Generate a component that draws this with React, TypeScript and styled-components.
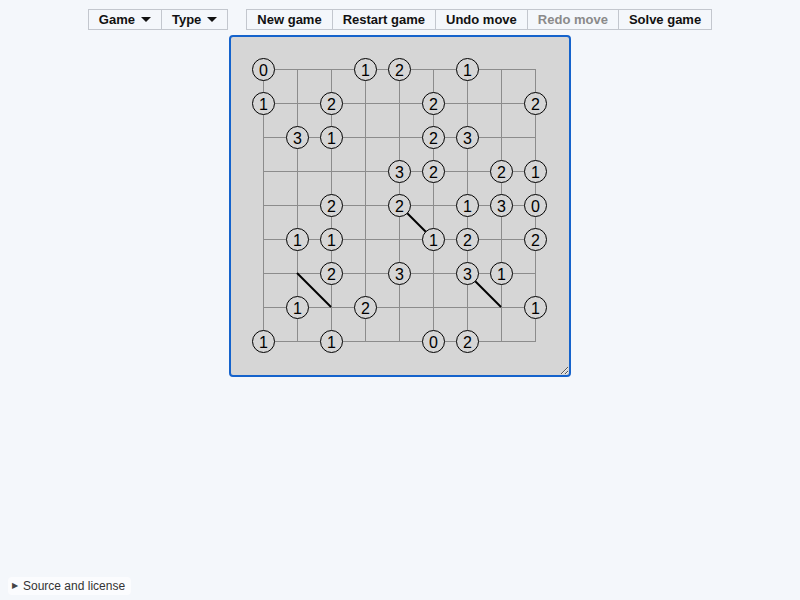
import React from 'react';
import styled, { createGlobalStyle } from 'styled-components';

const GlobalStyle = createGlobalStyle`
  html, body, #root {
    height: 100%;
  }
  body {
    margin: 0;
    background: #f4f7fb;
    font-family: "Liberation Sans", Arial, Helvetica, sans-serif;
  }
`;

const Page = styled.div`
  min-height: 100%;
  display: flex;
  flex-direction: column;
  align-items: center;
  box-sizing: border-box;
  padding-top: 9px;
`;

const Toolbar = styled.div`
  display: flex;
  gap: 18px;
  align-items: flex-start;
`;

const ButtonGroup = styled.div`
  display: flex;
  border: 1px solid #c3c7ce;
`;

const ToolButton = styled.button<{ $disabled?: boolean }>`
  height: 19px;
  padding: 0 10px;
  border: none;
  border-left: 1px solid #c3c7ce;
  background: transparent;
  font-family: inherit;
  font-weight: bold;
  font-size: 13px;
  color: ${p => (p.$disabled ? '#8a8a8a' : '#111')};
  display: flex;
  align-items: center;
  gap: 6px;
  cursor: default;
  &:first-child {
    border-left: none;
  }
`;

const Caret = () => (
  <svg width="10" height="5" viewBox="0 0 10 5">
    <path d="M0 0 L10 0 L5 5 Z" fill="#111" />
  </svg>
);

const Board = styled.div`
  margin-top: 5px;
  width: 338px;
  height: 338px;
  border: 2px solid #1563cc;
  border-radius: 4px;
  background: #d6d6d6;
  resize: both;
  overflow: hidden;
`;

const Footer = styled.details`
  margin-top: auto;
  align-self: flex-start;
  margin-left: 8px;
  margin-bottom: 5px;
  background: #fbfcfe;
  border-radius: 4px;
  padding: 2px 6px 2px 4px;
  font-size: 12px;
  color: #333;
`;

const Summary = styled.summary`
  list-style: none;
  display: flex;
  align-items: center;
  gap: 5px;
  line-height: 14px;
  &::-webkit-details-marker {
    display: none;
  }
`;

const Arrow = styled.span`
  font-size: 8px;
  color: #444;
`;

const N = 8;
const T = 34;
const O = 32;

// [col, row, value]
const clues: [number, number, number][] = [
  [0, 0, 0], [3, 0, 1], [4, 0, 2], [6, 0, 1],
  [0, 1, 1], [2, 1, 2], [5, 1, 2], [8, 1, 2],
  [1, 2, 3], [2, 2, 1], [5, 2, 2], [6, 2, 3],
  [4, 3, 3], [5, 3, 2], [7, 3, 2], [8, 3, 1],
  [2, 4, 2], [4, 4, 2], [6, 4, 1], [7, 4, 3], [8, 4, 0],
  [1, 5, 1], [2, 5, 1], [5, 5, 1], [6, 5, 2], [8, 5, 2],
  [2, 6, 2], [4, 6, 3], [6, 6, 3], [7, 6, 1],
  [1, 7, 1], [3, 7, 2], [8, 7, 1],
  [0, 8, 1], [2, 8, 1], [5, 8, 0], [6, 8, 2],
];

// backslash diagonals from top-left vertex [col, row]
const slashes: [number, number][] = [
  [4, 4], [1, 6], [6, 6],
];

const SlantGrid = () => {
  const lines = [];
  for (let i = 0; i <= N; i++) {
    lines.push(
      <line key={`h${i}`} x1={O} y1={O + i * T} x2={O + N * T} y2={O + i * T} />,
      <line key={`v${i}`} x1={O + i * T} y1={O} x2={O + i * T} y2={O + N * T} />
    );
  }
  return (
    <svg width="338" height="338" viewBox="0 0 338 338" style={{ display: 'block' }}>
      <g stroke="#8c8c8c" strokeWidth="1" shapeRendering="crispEdges" transform="translate(0.5 0.5)">
        {lines}
      </g>
      <g stroke="#000" strokeWidth="2">
        {slashes.map(([c, r]) => (
          <line key={`${c}-${r}`} x1={O + c * T} y1={O + r * T} x2={O + (c + 1) * T} y2={O + (r + 1) * T} />
        ))}
      </g>
      {clues.map(([c, r, v]) => (
        <g key={`${c}-${r}`}>
          <circle cx={O + c * T + 0.5} cy={O + r * T + 0.5} r="11" fill="#d6d6d6" stroke="#000" strokeWidth="1" />
          <text
            x={O + c * T + 0.5}
            y={O + r * T + 6.5}
            textAnchor="middle"
            fontSize="16"
            fontFamily="Liberation Sans, Arial, sans-serif"
            fill="#000"
          >
            {v}
          </text>
        </g>
      ))}
    </svg>
  );
};

export default function App() {
  return (
    <>
      <GlobalStyle />
      <Page>
        <Toolbar>
          <ButtonGroup>
            <ToolButton>Game <Caret /></ToolButton>
            <ToolButton>Type <Caret /></ToolButton>
          </ButtonGroup>
          <ButtonGroup>
            <ToolButton>New game</ToolButton>
            <ToolButton>Restart game</ToolButton>
            <ToolButton>Undo move</ToolButton>
            <ToolButton $disabled>Redo move</ToolButton>
            <ToolButton>Solve game</ToolButton>
          </ButtonGroup>
        </Toolbar>
        <Board>
          <SlantGrid />
        </Board>
        <Footer>
          <Summary>
            <Arrow>▶</Arrow>Source and license
          </Summary>
        </Footer>
      </Page>
    </>
  );
}
